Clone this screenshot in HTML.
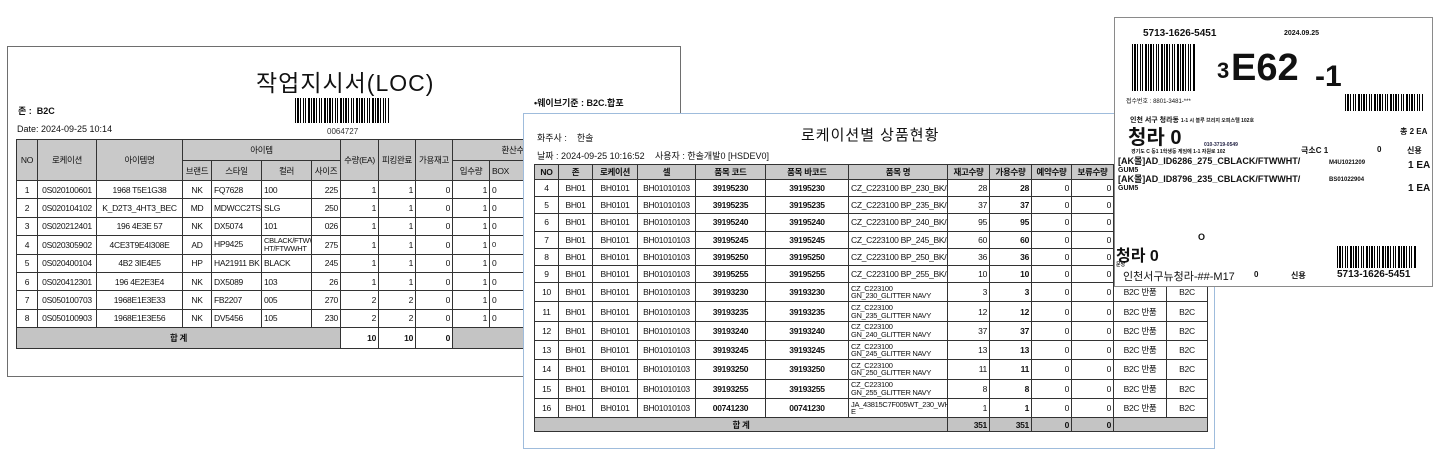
<!DOCTYPE html>
<html><head><meta charset="utf-8">
<style>
*{margin:0;padding:0;box-sizing:border-box}
body{width:1435px;height:450px;background:#fff;position:relative;overflow:hidden;font-family:"Liberation Sans","Noto Sans CJK KR",sans-serif;color:#111}
.abs{position:absolute;white-space:nowrap}
.doc1{position:absolute;left:7px;top:46px;width:674px;height:331px;border:1.5px solid #6e6e6e;background:#fff;z-index:1}
.doc2{position:absolute;left:523px;top:113px;width:692px;height:336px;border:1.5px solid #9fbcdc;background:#fff;z-index:2}
.doc3{position:absolute;left:1114px;top:17px;width:319px;height:270px;border:1.5px solid #8a8a8a;background:#fff;z-index:3}
table{border-collapse:collapse;table-layout:fixed;position:absolute;font-size:8.5px;letter-spacing:-0.3px}
td{border:1px solid #333;padding:0 2px;overflow:hidden;white-space:nowrap;text-align:center}
.h td{background:#c9c9c9}
.tot td{background:#c4c4c4;font-weight:bold}
.r{text-align:right}.l{text-align:left}
.b{font-weight:bold}
.bc{position:absolute;background:repeating-linear-gradient(90deg,#000 0 1px,#fff 1px 2px,#000 2px 4px,#fff 4px 5px,#000 5px 6px,#fff 6px 8px,#000 8px 9px,#fff 9px 10px,#000 10px 11px,#fff 11px 13px,#000 13px 15px,#fff 15px 16px)}
.nm td.l{font-size:7.5px;line-height:7.5px;white-space:normal}
</style></head><body>

<div class="doc1">
 <div class="abs" style="left:248px;top:17px;font-size:23px;letter-spacing:1px">작업지시서(LOC)</div>
 <div class="bc" style="left:287px;top:51px;width:94px;height:25px"></div>
 <div class="abs" style="left:319px;top:80px;font-size:8px;color:#333">0064727</div>
 <div class="abs b" style="left:10px;top:57px;font-size:9px">존 :&nbsp; B2C</div>
 <div class="abs" style="left:9px;top:77px;font-size:9px">Date: 2024-09-25 10:14</div>
 <div class="abs b" style="left:526px;top:49px;font-size:9px">•웨이브기준 : B2C.합포</div>
</div>
<table style="left:16px;top:139px;z-index:1;width:564px">
<colgroup><col style="width:21px"><col style="width:59px"><col style="width:86px"><col style="width:29px"><col style="width:50px"><col style="width:50px"><col style="width:29px"><col style="width:38px"><col style="width:37px"><col style="width:37px"><col style="width:37px"><col style="width:91px"></colgroup>
<tr class="h" style="height:21px"><td rowspan="2">NO</td><td rowspan="2">로케이션</td><td rowspan="2">아이템명</td><td colspan="4">아이템</td><td rowspan="2">수량(EA)</td><td rowspan="2">피킹완료</td><td rowspan="2">가용재고</td><td colspan="2">환산수량</td></tr>
<tr class="h" style="height:20px"><td>브랜드</td><td>스타일</td><td>컬러</td><td>사이즈</td><td>입수량</td><td class="l">BOX</td></tr>
<tr style="height:18.4px"><td>1</td><td>0S020100601</td><td>1968 T5E1G38</td><td>NK</td><td class="l">FQ7628</td><td class="l">100</td><td class="r">225</td><td class="r">1</td><td class="r">1</td><td class="r">0</td><td class="r">1</td><td class="l">0</td></tr>
<tr style="height:18.4px"><td>2</td><td>0S020104102</td><td>K_D2T3_4HT3_BEC</td><td>MD</td><td class="l">MDWCC2TSUN1</td><td class="l">SLG</td><td class="r">250</td><td class="r">1</td><td class="r">1</td><td class="r">0</td><td class="r">1</td><td class="l">0</td></tr>
<tr style="height:18.4px"><td>3</td><td>0S020212401</td><td>196 4E3E 57</td><td>NK</td><td class="l">DX5074</td><td class="l">101</td><td class="r">026</td><td class="r">1</td><td class="r">1</td><td class="r">0</td><td class="r">1</td><td class="l">0</td></tr>
<tr style="height:18.4px" class="nm"><td>4</td><td>0S020305902</td><td>4CE3T9E4I308E</td><td>AD</td><td class="l" style="font-size:8.5px">HP9425</td><td class="l">CBLACK/FTWW HT/FTWWHT</td><td class="r">275</td><td class="r">1</td><td class="r">1</td><td class="r">0</td><td class="r">1</td><td class="l">0</td></tr>
<tr style="height:18.4px"><td>5</td><td>0S020400104</td><td>4B2 3IE4E5</td><td>HP</td><td class="l">HA21911 BK</td><td class="l">BLACK</td><td class="r">245</td><td class="r">1</td><td class="r">1</td><td class="r">0</td><td class="r">1</td><td class="l">0</td></tr>
<tr style="height:18.4px"><td>6</td><td>0S020412301</td><td>196 4E2E3E4</td><td>NK</td><td class="l">DX5089</td><td class="l">103</td><td class="r">26</td><td class="r">1</td><td class="r">1</td><td class="r">0</td><td class="r">1</td><td class="l">0</td></tr>
<tr style="height:18.4px"><td>7</td><td>0S050100703</td><td>1968E1E3E33</td><td>NK</td><td class="l">FB2207</td><td class="l">005</td><td class="r">270</td><td class="r">2</td><td class="r">2</td><td class="r">0</td><td class="r">1</td><td class="l">0</td></tr>
<tr style="height:18.4px"><td>8</td><td>0S050100903</td><td>1968E1E3E56</td><td>NK</td><td class="l">DV5456</td><td class="l">105</td><td class="r">230</td><td class="r">2</td><td class="r">2</td><td class="r">0</td><td class="r">1</td><td class="l">0</td></tr>
<tr class="tot" style="height:21px"><td colspan="7">합 계</td><td class="r" style="background:#fff">10</td><td class="r" style="background:#fff">10</td><td class="r" style="background:#fff">0</td><td colspan="2"></td></tr>
</table>

<div class="doc2">
 <div class="abs" style="left:277px;top:10px;font-size:15px;letter-spacing:1px">로케이션별 상품현황</div>
 <div class="abs" style="left:13px;top:17px;font-size:9px">화주사 :&nbsp;&nbsp;&nbsp; 한솔</div>
 <div class="abs" style="left:13px;top:35px;font-size:9px">날짜 : 2024-09-25 10:16:52</div>
 <div class="abs" style="left:131px;top:35px;font-size:9px">사용자 : 한솔개발0 [HSDEV0]</div>
</div>
<table style="left:534px;top:164px;z-index:2;width:673px">
<colgroup><col style="width:24px"><col style="width:34px"><col style="width:45px"><col style="width:58px"><col style="width:70px"><col style="width:83px"><col style="width:99px"><col style="width:42px"><col style="width:42px"><col style="width:40px"><col style="width:42px"><col style="width:53px"><col style="width:41px"></colgroup>
<tr class="h b" style="height:15px"><td>NO</td><td>존</td><td>로케이션</td><td>셀</td><td>품목 코드</td><td>품목 바코드</td><td>품목 명</td><td>재고수량</td><td>가용수량</td><td>예약수량</td><td>보류수량</td><td></td><td></td></tr>
<tr style="height:17.2px"><td>4</td><td>BH01</td><td>BH0101</td><td>BH01010103</td><td class="b">39195230</td><td class="b">39195230</td><td class="l">CZ_C223100 BP_230_BK/PP</td><td class="r">28</td><td class="r b">28</td><td class="r">0</td><td class="r">0</td><td></td><td></td></tr>
<tr style="height:17.2px"><td>5</td><td>BH01</td><td>BH0101</td><td>BH01010103</td><td class="b">39195235</td><td class="b">39195235</td><td class="l">CZ_C223100 BP_235_BK/PP</td><td class="r">37</td><td class="r b">37</td><td class="r">0</td><td class="r">0</td><td></td><td></td></tr>
<tr style="height:17.2px"><td>6</td><td>BH01</td><td>BH0101</td><td>BH01010103</td><td class="b">39195240</td><td class="b">39195240</td><td class="l">CZ_C223100 BP_240_BK/PP</td><td class="r">95</td><td class="r b">95</td><td class="r">0</td><td class="r">0</td><td></td><td></td></tr>
<tr style="height:17.2px"><td>7</td><td>BH01</td><td>BH0101</td><td>BH01010103</td><td class="b">39195245</td><td class="b">39195245</td><td class="l">CZ_C223100 BP_245_BK/PP</td><td class="r">60</td><td class="r b">60</td><td class="r">0</td><td class="r">0</td><td></td><td></td></tr>
<tr style="height:17.2px"><td>8</td><td>BH01</td><td>BH0101</td><td>BH01010103</td><td class="b">39195250</td><td class="b">39195250</td><td class="l">CZ_C223100 BP_250_BK/PP</td><td class="r">36</td><td class="r b">36</td><td class="r">0</td><td class="r">0</td><td></td><td></td></tr>
<tr style="height:17.2px"><td>9</td><td>BH01</td><td>BH0101</td><td>BH01010103</td><td class="b">39195255</td><td class="b">39195255</td><td class="l">CZ_C223100 BP_255_BK/PP</td><td class="r">10</td><td class="r b">10</td><td class="r">0</td><td class="r">0</td><td></td><td></td></tr>
<tr class="nm" style="height:19.3px"><td>10</td><td>BH01</td><td>BH0101</td><td>BH01010103</td><td class="b">39193230</td><td class="b">39193230</td><td class="l">CZ_C223100 GN_230_GLITTER NAVY</td><td class="r">3</td><td class="r b">3</td><td class="r">0</td><td class="r">0</td><td>B2C 반품</td><td>B2C</td></tr>
<tr class="nm" style="height:19.3px"><td>11</td><td>BH01</td><td>BH0101</td><td>BH01010103</td><td class="b">39193235</td><td class="b">39193235</td><td class="l">CZ_C223100 GN_235_GLITTER NAVY</td><td class="r">12</td><td class="r b">12</td><td class="r">0</td><td class="r">0</td><td>B2C 반품</td><td>B2C</td></tr>
<tr class="nm" style="height:19.3px"><td>12</td><td>BH01</td><td>BH0101</td><td>BH01010103</td><td class="b">39193240</td><td class="b">39193240</td><td class="l">CZ_C223100 GN_240_GLITTER NAVY</td><td class="r">37</td><td class="r b">37</td><td class="r">0</td><td class="r">0</td><td>B2C 반품</td><td>B2C</td></tr>
<tr class="nm" style="height:19.3px"><td>13</td><td>BH01</td><td>BH0101</td><td>BH01010103</td><td class="b">39193245</td><td class="b">39193245</td><td class="l">CZ_C223100 GN_245_GLITTER NAVY</td><td class="r">13</td><td class="r b">13</td><td class="r">0</td><td class="r">0</td><td>B2C 반품</td><td>B2C</td></tr>
<tr class="nm" style="height:19.3px"><td>14</td><td>BH01</td><td>BH0101</td><td>BH01010103</td><td class="b">39193250</td><td class="b">39193250</td><td class="l">CZ_C223100 GN_250_GLITTER NAVY</td><td class="r">11</td><td class="r b">11</td><td class="r">0</td><td class="r">0</td><td>B2C 반품</td><td>B2C</td></tr>
<tr class="nm" style="height:19.3px"><td>15</td><td>BH01</td><td>BH0101</td><td>BH01010103</td><td class="b">39193255</td><td class="b">39193255</td><td class="l">CZ_C223100 GN_255_GLITTER NAVY</td><td class="r">8</td><td class="r b">8</td><td class="r">0</td><td class="r">0</td><td>B2C 반품</td><td>B2C</td></tr>
<tr class="nm" style="height:19.3px"><td>16</td><td>BH01</td><td>BH0101</td><td>BH01010103</td><td class="b">00741230</td><td class="b">00741230</td><td class="l">JA_43815C7F005WT_230_WHIT E</td><td class="r">1</td><td class="r b">1</td><td class="r">0</td><td class="r">0</td><td>B2C 반품</td><td>B2C</td></tr>
<tr class="tot" style="height:14px"><td colspan="7">합 계</td><td class="r">351</td><td class="r">351</td><td class="r">0</td><td class="r">0</td><td colspan="2"></td></tr>
</table>

<div class="doc3">
 <div class="abs b" style="left:28px;top:10px;font-size:10px">5713-1626-5451</div>
 <div class="abs b" style="left:169px;top:12px;font-size:7px">2024.09.25</div>
 <div class="bc" style="left:17px;top:26px;width:63px;height:47px"></div>
 <div class="abs b" style="left:102px;top:40px;font-size:22px">3</div>
 <div class="abs b" style="left:116px;top:30px;font-size:38px;line-height:40px">E62</div>
 <div class="abs b" style="left:200px;top:43px;font-size:30px;line-height:32px">-1</div>
 <div class="abs" style="left:11px;top:78px;font-size:6px">접수번호 : 8801-3481-***</div>
 <div class="bc" style="left:230px;top:76px;width:78px;height:17px"></div>
 <div class="abs b" style="left:15px;top:97px;font-size:7px">인천 서구 청라동 <span style="font-size:5px">1-1 시 블루 브리지 오피스텔 102호</span></div>
 <div class="abs b" style="left:13px;top:103px;font-size:20px">청라 0</div>
 <div class="abs b" style="left:285px;top:108px;font-size:8px">총 2 EA</div>
 <div class="abs b" style="left:89px;top:124px;font-size:5px;color:#224">010-3719-0549</div>
 <div class="abs b" style="left:16px;top:130px;font-size:5px">경기도 C 동1 1학생동 게임에 1-1 자원로 102</div>
 <div class="abs b" style="left:186px;top:127px;font-size:8px">극소C 1</div>
 <div class="abs b" style="left:262px;top:127px;font-size:8px">0</div>
 <div class="abs b" style="left:292px;top:127px;font-size:8px">신용</div>
 <div class="abs" style="left:3px;top:139px;font-size:9px;line-height:8px;font-weight:bold">[AK몰]AD_ID6286_275_CBLACK/FTWWHT/<br><span style="font-size:7px">GUM5</span></div>
 <div class="abs b" style="left:214px;top:142px;font-size:6px">M4U1021209</div>
 <div class="abs b" style="left:293px;top:142px;font-size:10px">1 EA</div>
 <div class="abs" style="left:3px;top:157px;font-size:9px;line-height:8px;font-weight:bold">[AK몰]AD_ID8796_235_CBLACK/FTWWHT/<br><span style="font-size:7px">GUM5</span></div>
 <div class="abs b" style="left:214px;top:159px;font-size:6px">BS01022904</div>
 <div class="abs b" style="left:293px;top:165px;font-size:10px">1 EA</div>
 <div class="abs b" style="left:83px;top:214px;font-size:9px">O</div>
 <div class="abs b" style="left:1px;top:224px;font-size:16px">청라 0</div>
 <div class="abs b" style="left:1px;top:243px;font-size:5px">문앙</div>
 <div class="abs" style="left:8px;top:250px;font-size:11px">인천서구뉴청라-##-M17</div>
 <div class="abs b" style="left:139px;top:252px;font-size:8px">0</div>
 <div class="abs b" style="left:176px;top:252px;font-size:8px">신용</div>
 <div class="bc" style="left:222px;top:228px;width:79px;height:22px"></div>
 <div class="abs b" style="left:222px;top:251px;font-size:10px">5713-1626-5451</div>
</div>
</body></html>
